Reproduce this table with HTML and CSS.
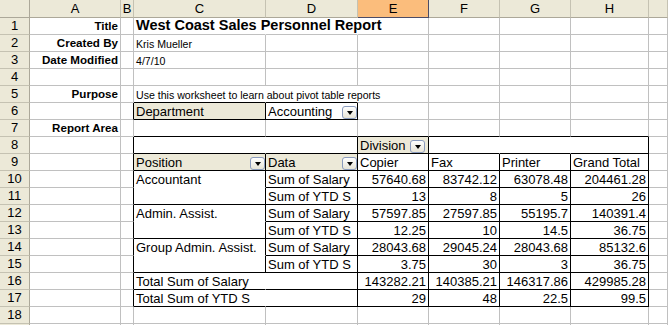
FILE: index.html
```html
<!DOCTYPE html>
<html>
<head>
<meta charset="utf-8">
<title>West Coast Sales Personnel Report</title>
<link rel="stylesheet" href="styles.css">
</head>
<body>
<div class="sheet">
  <!-- column headers -->
  <div class="corner"></div><div class="ch">A</div><div class="ch">B</div><div class="ch">C</div><div class="ch">D</div><div class="ch sel">E</div><div class="ch">F</div><div class="ch">G</div><div class="ch">H</div><div class="ch"></div>

  <!-- 1 -->
  <div class="rh">1</div><div class="c lbl">Title</div><div class="c"></div><div class="c title nr">West Coast Sales Personnel Report</div><div class="c nr"></div><div class="c"></div><div class="c"></div><div class="c"></div><div class="c"></div><div class="c"></div>
  <!-- 2 -->
  <div class="rh">2</div><div class="c lbl">Created By</div><div class="c"></div><div class="c sm">Kris Mueller</div><div class="c"></div><div class="c"></div><div class="c"></div><div class="c"></div><div class="c"></div><div class="c"></div>
  <!-- 3 -->
  <div class="rh">3</div><div class="c lbl">Date Modified</div><div class="c"></div><div class="c sm">4/7/10</div><div class="c"></div><div class="c"></div><div class="c"></div><div class="c"></div><div class="c"></div><div class="c"></div>
  <!-- 4 -->
  <div class="rh">4</div><div class="c"></div><div class="c"></div><div class="c"></div><div class="c"></div><div class="c"></div><div class="c"></div><div class="c"></div><div class="c"></div><div class="c"></div>
  <!-- 5 -->
  <div class="rh">5</div><div class="c lbl">Purpose</div><div class="c"></div><div class="c sm nr bb">Use this worksheet to learn about pivot table reports</div><div class="c nr bb"></div><div class="c"></div><div class="c"></div><div class="c"></div><div class="c"></div><div class="c"></div>
  <!-- 6 -->
  <div class="rh">6</div><div class="c"></div><div class="c br"></div><div class="c pv fld br bb">Department</div><div class="c pv btn br bb"><span>Accounting</span><span class="dd"></span></div><div class="c"></div><div class="c"></div><div class="c"></div><div class="c"></div><div class="c"></div>
  <!-- 7 -->
  <div class="rh">7</div><div class="c lbl">Report Area</div><div class="c"></div><div class="c bb"></div><div class="c bb"></div><div class="c bb"></div><div class="c bb"></div><div class="c bb"></div><div class="c bb"></div><div class="c"></div>
  <!-- 8 -->
  <div class="rh">8</div><div class="c"></div><div class="c br"></div><div class="c nr bb"></div><div class="c br bb"></div><div class="c pv fld btn br bb"><span>Division</span><span class="dd dd-gap"></span></div><div class="c nr bb"></div><div class="c nr bb"></div><div class="c br bb"></div><div class="c"></div>
  <!-- 9 -->
  <div class="rh">9</div><div class="c"></div><div class="c br"></div><div class="c pv fld btn br bb"><span>Position</span><span class="dd"></span></div><div class="c pv fld btn br bb"><span>Data</span><span class="dd"></span></div><div class="c pv br bb">Copier</div><div class="c pv br bb">Fax</div><div class="c pv br bb">Printer</div><div class="c pv br bb">Grand Total</div><div class="c"></div>
  <!-- 10 -->
  <div class="rh">10</div><div class="c"></div><div class="c br"></div><div class="c pv br nb">Accountant</div><div class="c pv br bb">Sum of Salary</div><div class="c pv num br bb">57640.68</div><div class="c pv num br bb">83742.12</div><div class="c pv num br bb">63078.48</div><div class="c pv num br bb">204461.28</div><div class="c"></div>
  <!-- 11 -->
  <div class="rh">11</div><div class="c"></div><div class="c br"></div><div class="c pv br bb"></div><div class="c pv br bb">Sum of YTD S</div><div class="c pv num br bb">13</div><div class="c pv num br bb">8</div><div class="c pv num br bb">5</div><div class="c pv num br bb">26</div><div class="c"></div>
  <!-- 12 -->
  <div class="rh">12</div><div class="c"></div><div class="c br"></div><div class="c pv br nb">Admin. Assist.</div><div class="c pv br bb">Sum of Salary</div><div class="c pv num br bb">57597.85</div><div class="c pv num br bb">27597.85</div><div class="c pv num br bb">55195.7</div><div class="c pv num br bb">140391.4</div><div class="c"></div>
  <!-- 13 -->
  <div class="rh">13</div><div class="c"></div><div class="c br"></div><div class="c pv br bb"></div><div class="c pv br bb">Sum of YTD S</div><div class="c pv num br bb">12.25</div><div class="c pv num br bb">10</div><div class="c pv num br bb">14.5</div><div class="c pv num br bb">36.75</div><div class="c"></div>
  <!-- 14 -->
  <div class="rh">14</div><div class="c"></div><div class="c br"></div><div class="c pv br nb">Group Admin. Assist.</div><div class="c pv br bb">Sum of Salary</div><div class="c pv num br bb">28043.68</div><div class="c pv num br bb">29045.24</div><div class="c pv num br bb">28043.68</div><div class="c pv num br bb">85132.6</div><div class="c"></div>
  <!-- 15 -->
  <div class="rh">15</div><div class="c"></div><div class="c br"></div><div class="c pv br bb"></div><div class="c pv br bb">Sum of YTD S</div><div class="c pv num br bb">3.75</div><div class="c pv num br bb">30</div><div class="c pv num br bb">3</div><div class="c pv num br bb">36.75</div><div class="c"></div>
  <!-- 16 -->
  <div class="rh">16</div><div class="c"></div><div class="c br"></div><div class="c pv nr bb">Total Sum of Salary</div><div class="c pv br bb"></div><div class="c pv num br bb">143282.21</div><div class="c pv num br bb">140385.21</div><div class="c pv num br bb">146317.86</div><div class="c pv num br bb">429985.28</div><div class="c"></div>
  <!-- 17 -->
  <div class="rh">17</div><div class="c"></div><div class="c br"></div><div class="c pv nr bb">Total Sum of YTD S</div><div class="c pv br bb"></div><div class="c pv num br bb">29</div><div class="c pv num br bb">48</div><div class="c pv num br bb">22.5</div><div class="c pv num br bb">99.5</div><div class="c"></div>
  <!-- 18 -->
  <div class="rh">18</div><div class="c"></div><div class="c"></div><div class="c"></div><div class="c"></div><div class="c"></div><div class="c"></div><div class="c"></div><div class="c"></div><div class="c"></div>
  <!-- 19 (only a sliver visible) -->
  <div class="rh"></div><div class="c"></div><div class="c"></div><div class="c"></div><div class="c"></div><div class="c"></div><div class="c"></div><div class="c"></div><div class="c"></div><div class="c"></div>
</div>
</body>
</html>
```

FILE: styles.css
```css
html, body {
  margin: 0;
  padding: 0;
  background: #ffffff;
  overflow: hidden;
}

body {
  font-family: "Liberation Sans", Arial, sans-serif;
  color: #000;
}

.sheet {
  display: grid;
  grid-template-columns: 30px 91px 13px 132px 92px 71px 71px 71px 78px 1fr;
  grid-template-rows: 18px repeat(19, 17px);
  width: 668px;
}

.sheet > div {
  box-sizing: border-box;
  min-width: 0;
  white-space: nowrap;
}

/* headers */
.corner,
.ch,
.rh {
  background: #ece9d8;
  border-right: 1px solid #aca899;
  border-bottom: 1px solid #aca899;
  font-size: 13px;
  display: flex;
  align-items: center;
  justify-content: center;
  line-height: 14px;
}

.ch {
  padding-top: 1px;
  border-right-color: #c5c2b2;
}

.ch.sel {
  background: #fbbd7c;
  border-right-color: #4c4c66;
  border-bottom-color: #4c4c66;
}

.rh {
  border-bottom-color: #c5c2b2;
}

/* cells */
.c {
  border-right: 1px solid #c0c0c0;
  border-bottom: 1px solid #c0c0c0;
  display: flex;
  align-items: flex-end;
  padding: 0 2px;
  font-size: 13px;
  line-height: 15px;
}

.lbl {
  justify-content: flex-end;
  font-weight: bold;
  font-size: 11.6px;
  line-height: 16px;
}

.title {
  font-weight: bold;
  font-size: 14.5px;
  line-height: 18px;
}

.sm {
  font-size: 10.6px;
  line-height: 13px;
}

.pv {
  font-size: 13px;
  line-height: 15px;
}

.num {
  justify-content: flex-end;
  padding-right: 2px;
}

.fld {
  background: #ece9d8;
}

.btn {
  padding-right: 0;
}

.dd {
  margin-left: auto;
  width: 15px;
  height: 13px;
  box-sizing: border-box;
  border: 1px solid #8a9bbd;
  border-radius: 3px;
  background: linear-gradient(#ffffff, #e6e3d6);
  display: flex;
  align-items: center;
  justify-content: center;
  flex: none;
}

.dd::after {
  content: "";
  width: 0;
  height: 0;
  border-left: 3.5px solid transparent;
  border-right: 3.5px solid transparent;
  border-top: 4px solid #000;
}

.dd-gap {
  margin-right: 3px;
}

/* border modifiers */
.nr { border-right-color: transparent; }
.nb { border-bottom-color: transparent; }
.br { border-right-color: #000; }
.bb { border-bottom-color: #000; }
```
